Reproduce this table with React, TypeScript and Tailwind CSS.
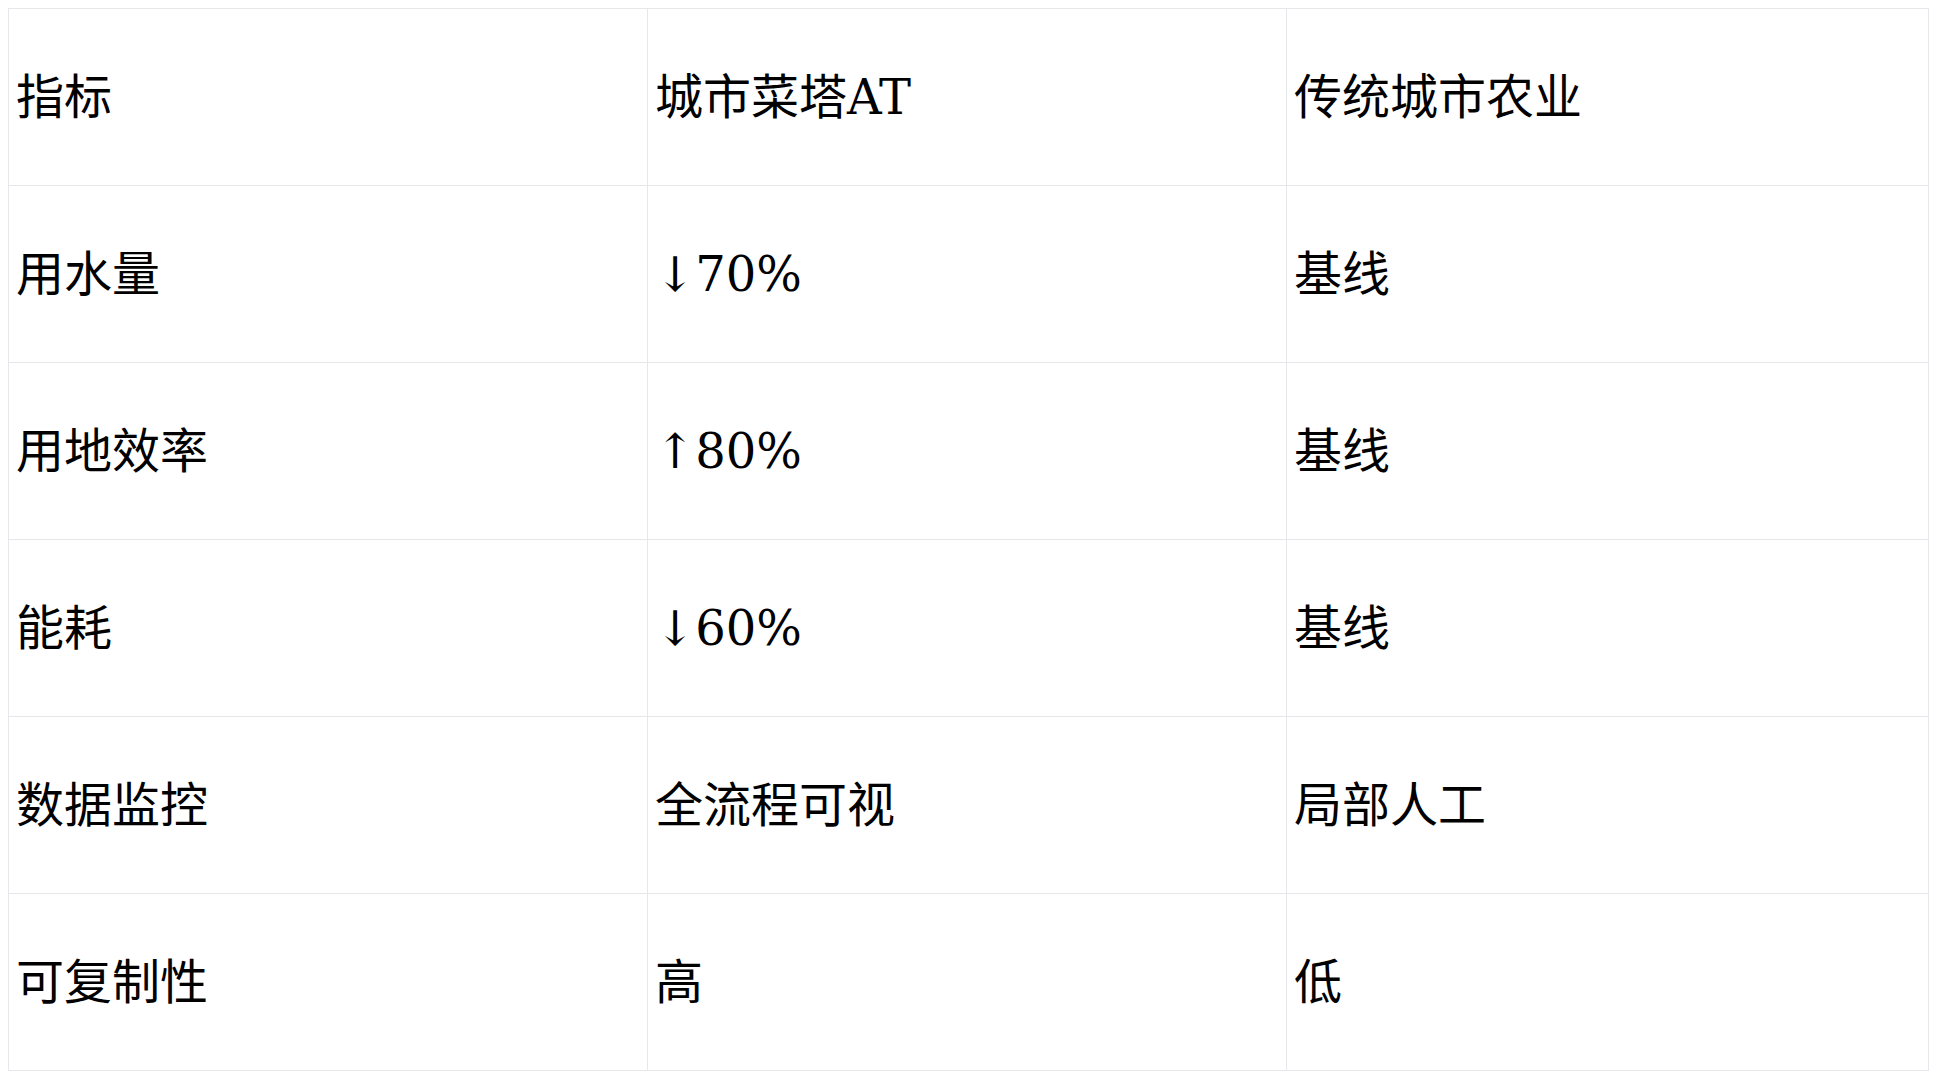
import React from "react";

const rows = [
  ["指标", "城市菜塔AT", "传统城市农业"],
  ["用水量", "↓70%", "基线"],
  ["用地效率", "↑80%", "基线"],
  ["能耗", "↓60%", "基线"],
  ["数据监控", "全流程可视", "局部人工"],
  ["可复制性", "高", "低"],
];

export default function App() {
  return (
    <div className="min-h-screen bg-white p-2">
      <table
        className="w-[1921px] table-fixed border-collapse text-[48px] text-black"
        style={{ fontFamily: '"DejaVu Serif", "Noto Sans CJK SC", serif' }}
      >
        <colgroup>
          <col className="w-[639px]" />
          <col className="w-[639px]" />
          <col />
        </colgroup>
        <tbody>
          {rows.map((row, i) => (
            <tr key={i} className="h-[177px]">
              {row.map((cell, j) => (
                <td
                  key={j}
                  className="border border-[#e5e7eb] pl-[7px] pr-2 align-middle leading-none"
                >
                  {cell}
                </td>
              ))}
            </tr>
          ))}
        </tbody>
      </table>
    </div>
  );
}
